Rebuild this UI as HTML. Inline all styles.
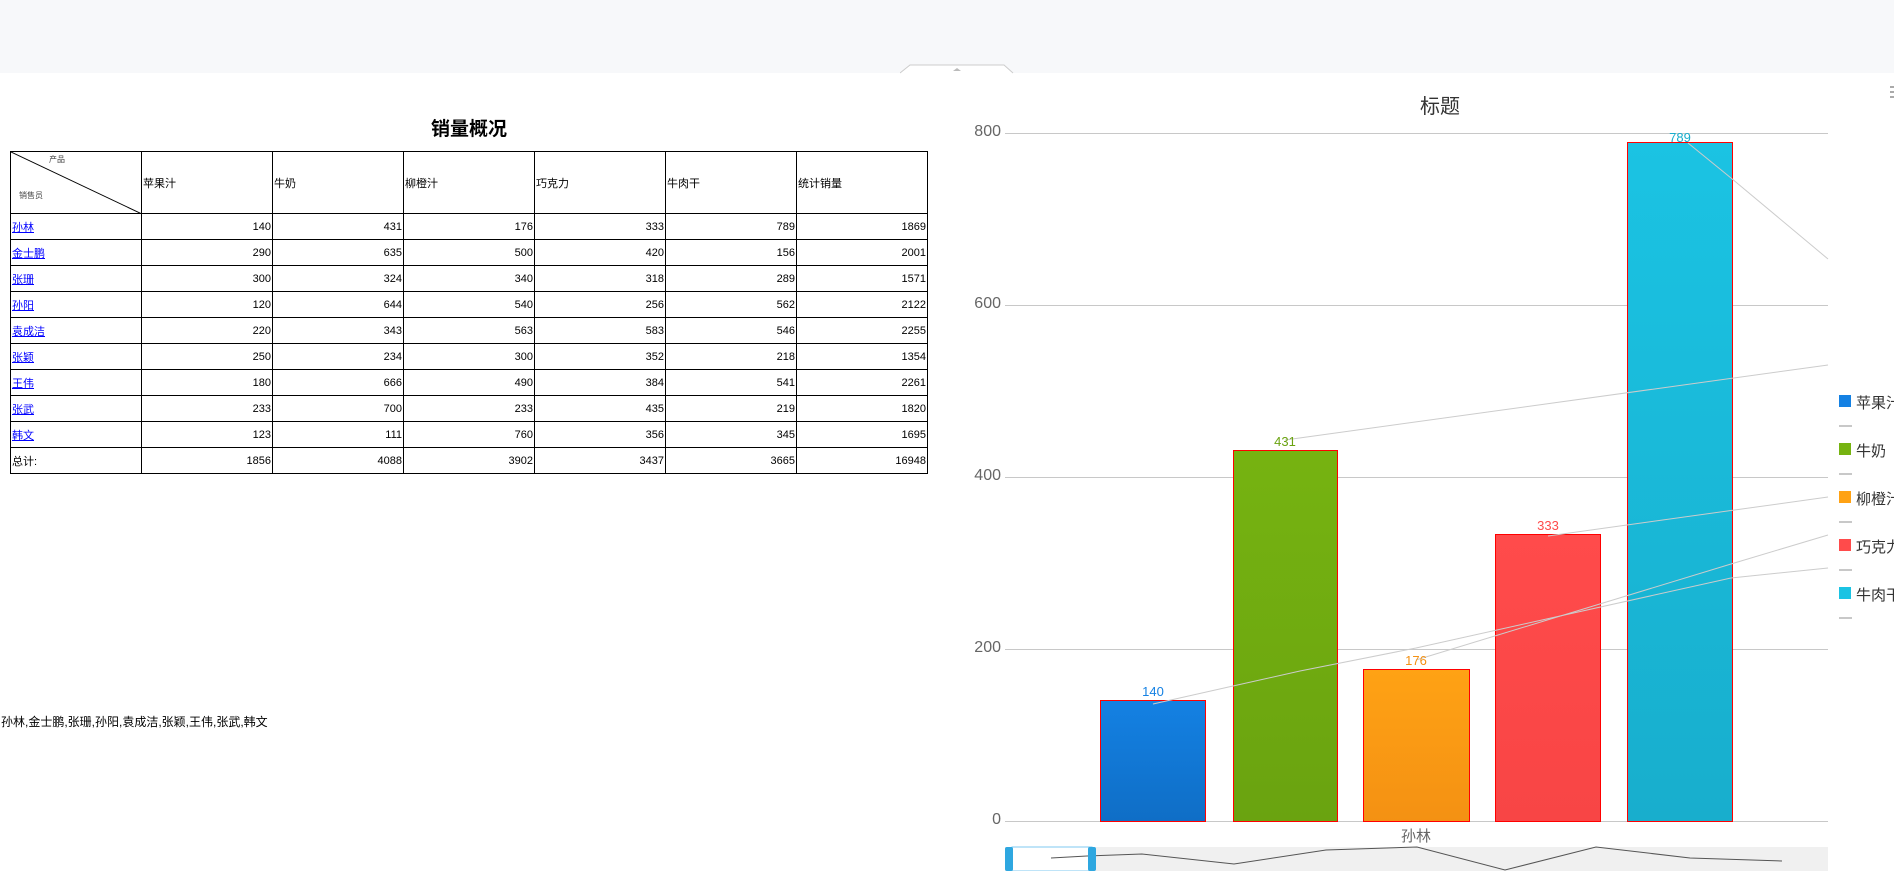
<!DOCTYPE html>
<html><head><meta charset="utf-8"><style>
*{margin:0;padding:0;box-sizing:border-box}
body{width:1894px;height:871px;overflow:hidden;background:#fff;position:relative;font-family:"Liberation Sans","Noto Sans CJK SC",sans-serif}
.top{position:absolute;left:0;top:0;width:1894px;height:73px;background:#f7f8fa}
.ttl{position:absolute;left:0;width:938px;top:114px;text-align:center;font-size:19px;font-weight:bold;color:#000}
table{position:absolute;left:10px;top:151px;border-collapse:collapse;font-size:11px;color:#000}
td{border:1px solid #000;height:26px;padding:0 1px;width:131px}
td.n{text-align:right}
tr.h td{height:62px}
a{color:#00f;text-decoration:underline}
.foot{position:absolute;left:1px;top:713px;font-size:12px}
.ax{position:absolute;font-size:16px;color:#666;text-align:right;width:40px}
.lbl{position:absolute;font-size:13px;text-align:center;width:40px}
.leg{position:absolute;left:1856px;font-size:15px;color:#333;white-space:nowrap}
</style></head><body>
<div class="top"></div>
<svg style="position:absolute;left:900px;top:64px" width="114" height="10"><path d="M0 9 L10 1 L104 1 L113 9" fill="#fff" stroke="#ccc"/><path d="M53 7 L57 4 L61 7Z" fill="#bbb"/></svg>
<div class="ttl">销量概况</div>
<table>
<tr class="h"><td style="position:relative"><svg style="position:absolute;left:0;top:0" width="131" height="62"><line x1="0" y1="0" x2="131" y2="62" stroke="#000"/></svg><span style="position:absolute;left:38px;top:2px;font-size:8px;color:#444">产品</span><span style="position:absolute;left:8px;top:38px;font-size:8px;color:#444">销售员</span></td><td>苹果汁</td><td>牛奶</td><td>柳橙汁</td><td>巧克力</td><td>牛肉干</td><td>统计销量</td></tr>
<tr><td><a>孙林</a></td><td class="n">140</td><td class="n">431</td><td class="n">176</td><td class="n">333</td><td class="n">789</td><td class="n">1869</td></tr>
<tr><td><a>金士鹏</a></td><td class="n">290</td><td class="n">635</td><td class="n">500</td><td class="n">420</td><td class="n">156</td><td class="n">2001</td></tr>
<tr><td><a>张珊</a></td><td class="n">300</td><td class="n">324</td><td class="n">340</td><td class="n">318</td><td class="n">289</td><td class="n">1571</td></tr>
<tr><td><a>孙阳</a></td><td class="n">120</td><td class="n">644</td><td class="n">540</td><td class="n">256</td><td class="n">562</td><td class="n">2122</td></tr>
<tr><td><a>袁成洁</a></td><td class="n">220</td><td class="n">343</td><td class="n">563</td><td class="n">583</td><td class="n">546</td><td class="n">2255</td></tr>
<tr><td><a>张颖</a></td><td class="n">250</td><td class="n">234</td><td class="n">300</td><td class="n">352</td><td class="n">218</td><td class="n">1354</td></tr>
<tr><td><a>王伟</a></td><td class="n">180</td><td class="n">666</td><td class="n">490</td><td class="n">384</td><td class="n">541</td><td class="n">2261</td></tr>
<tr><td><a>张武</a></td><td class="n">233</td><td class="n">700</td><td class="n">233</td><td class="n">435</td><td class="n">219</td><td class="n">1820</td></tr>
<tr><td><a>韩文</a></td><td class="n">123</td><td class="n">111</td><td class="n">760</td><td class="n">356</td><td class="n">345</td><td class="n">1695</td></tr>
<tr><td>总计:</td><td class="n">1856</td><td class="n">4088</td><td class="n">3902</td><td class="n">3437</td><td class="n">3665</td><td class="n">16948</td></tr>
</table>
<div class="foot">孙林,金士鹏,张珊,孙阳,袁成洁,张颖,王伟,张武,韩文</div>

<div style="position:absolute;left:1400px;top:90px;width:80px;text-align:center;font-size:20px;color:#333">标题</div>
<div class="ax" style="left:961px;top:123px">800</div>
<div class="ax" style="left:961px;top:295px">600</div>
<div class="ax" style="left:961px;top:467px">400</div>
<div class="ax" style="left:961px;top:639px">200</div>
<div class="ax" style="left:961px;top:811px">0</div>
<svg style="position:absolute;left:0;top:0" width="1894" height="871">
<defs>
<linearGradient id="g1" x1="0" y1="0" x2="0" y2="1"><stop offset="0" stop-color="#1481e3"/><stop offset="1" stop-color="#0f6ec6"/></linearGradient>
<linearGradient id="g2" x1="0" y1="0" x2="0" y2="1"><stop offset="0" stop-color="#76b311"/><stop offset="1" stop-color="#6aa310"/></linearGradient>
<linearGradient id="g3" x1="0" y1="0" x2="0" y2="1"><stop offset="0" stop-color="#ffa214"/><stop offset="1" stop-color="#f49113"/></linearGradient>
<linearGradient id="g4" x1="0" y1="0" x2="0" y2="1"><stop offset="0" stop-color="#ff4b4b"/><stop offset="1" stop-color="#f84545"/></linearGradient>
<linearGradient id="g5" x1="0" y1="0" x2="0" y2="1"><stop offset="0" stop-color="#1bc3e3"/><stop offset="1" stop-color="#18aecd"/></linearGradient>
</defs>
<g stroke="#c8c8c8" stroke-width="1">
<line x1="1005" y1="133.5" x2="1828" y2="133.5"/><line x1="1005" y1="305.5" x2="1828" y2="305.5"/><line x1="1005" y1="477.5" x2="1828" y2="477.5"/><line x1="1005" y1="649.5" x2="1828" y2="649.5"/><line x1="1005" y1="821.5" x2="1828" y2="821.5"/>
</g>
<g stroke="#f00" stroke-width="1">
<rect x="1100.5" y="700.5" width="105" height="121" fill="url(#g1)"/>
<rect x="1233.5" y="450.5" width="104" height="371" fill="url(#g2)"/>
<rect x="1363.5" y="669.5" width="106" height="152" fill="url(#g3)"/>
<rect x="1495.5" y="534.5" width="105" height="287" fill="url(#g4)"/>
<rect x="1627.5" y="142.5" width="105" height="679" fill="url(#g5)"/>
</g>
<g stroke="#ccc" fill="none" stroke-width="1">
<polyline points="1153,704 1233,686 1300,671 1416,648 1731,578 1828,568"/>
<polyline points="1285,440 1828,365"/>
<polyline points="1416,660 1731,564 1828,535"/>
<polyline points="1548,536 1828,497"/>
<polyline points="1688,143 1731,178 1828,259"/>
</g>
<g fill="#c8c8c8"><rect x="1839" y="425" width="13" height="2"/><rect x="1839" y="473" width="13" height="2"/><rect x="1839" y="521" width="13" height="2"/><rect x="1839" y="569" width="13" height="2"/><rect x="1839" y="617" width="13" height="2"/></g>
<rect x="1839" y="395" width="12" height="12" fill="#1481e3"/>
<rect x="1839" y="443" width="12" height="12" fill="#76b311"/>
<rect x="1839" y="491" width="12" height="12" fill="#ffa214"/>
<rect x="1839" y="539" width="12" height="12" fill="#ff4b4b"/>
<rect x="1839" y="587" width="12" height="12" fill="#1bc3e3"/>
<g fill="#aaa"><rect x="1890" y="86" width="4" height="2"/><rect x="1890" y="91" width="4" height="2"/><rect x="1890" y="96" width="4" height="2"/></g>
<rect x="1005" y="847" width="823" height="24" fill="#f0f0f0"/>
<rect x="1012" y="847" width="80" height="24" fill="#fff" stroke="#7fcaf0"/>
<polyline points="1051,858 1087,856 1142,854 1234,864 1326,850 1417,847 1505,870 1596,847 1690,858 1782,861" fill="none" stroke="#555"/>
<rect x="1005" y="847" width="8" height="24" rx="2" fill="#2ea7e0"/>
<rect x="1088" y="847" width="8" height="24" rx="2" fill="#2ea7e0"/>
</svg>
<div class="lbl" style="left:1133px;top:684px;color:#1481e3">140</div>
<div class="lbl" style="left:1265px;top:434px;color:#6aa310">431</div>
<div class="lbl" style="left:1396px;top:653px;color:#f49113">176</div>
<div class="lbl" style="left:1528px;top:518px;color:#ff4b4b">333</div>
<div class="lbl" style="left:1660px;top:130px;color:#18aecd">789</div>
<div style="position:absolute;left:1396px;top:825px;width:40px;text-align:center;font-size:15px;color:#666">孙林</div>
<div class="leg" style="top:392px">苹果汁</div>
<div class="leg" style="top:440px">牛奶</div>
<div class="leg" style="top:488px">柳橙汁</div>
<div class="leg" style="top:536px">巧克力</div>
<div class="leg" style="top:584px">牛肉干</div>
</body></html>
